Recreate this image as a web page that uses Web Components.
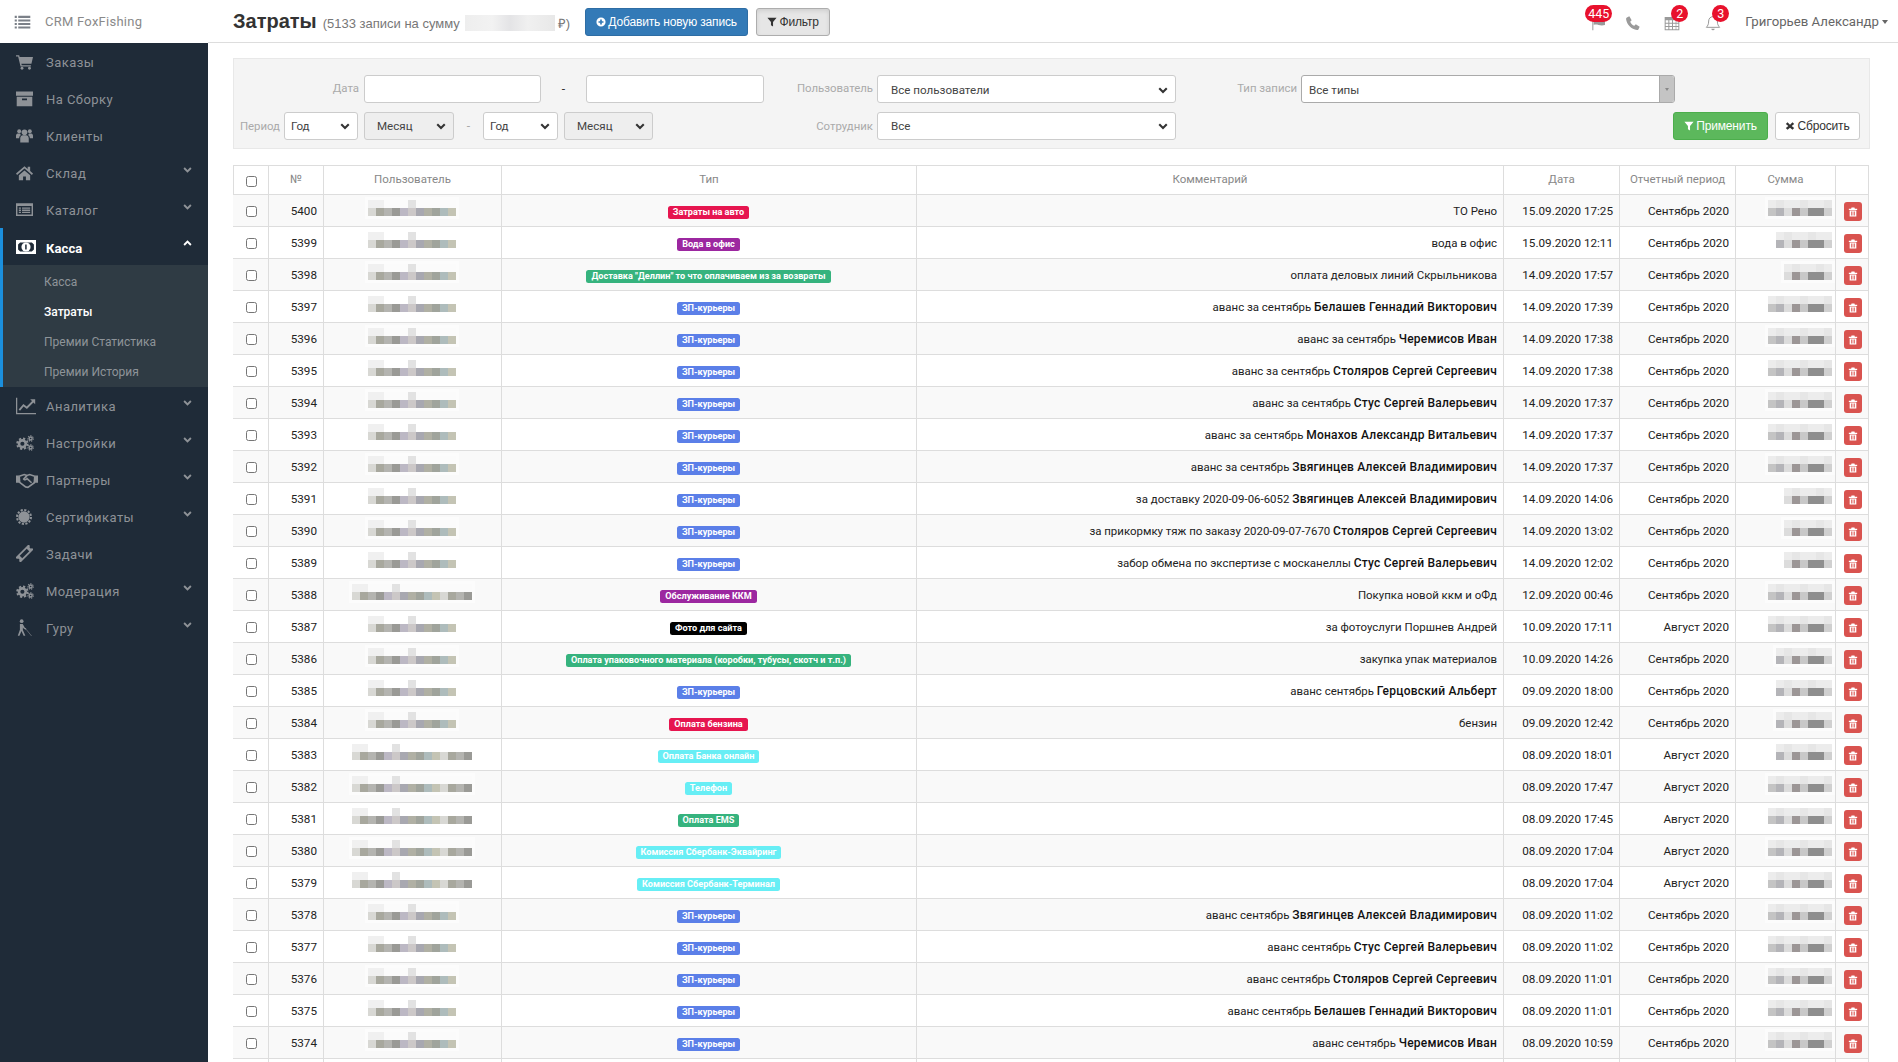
<!DOCTYPE html>
<html lang="ru">
<head>
<meta charset="utf-8">
<title>Затраты</title>
<style>
  html, body { margin: 0; height: 100%; overflow: hidden; background: #fff; }
  body { font-family: Roboto, "Liberation Sans", sans-serif; font-size: 12px; color: #222; }
</style>
</head>
<body>
<x-app></x-app>

<script>
// icons, all drawn on a 24x24 box
const ICONS = {
  menu: '<path d="M1 4h3v3H1zM6 4h17v3H6zM1 9h3v3H1zM6 9h17v3H6zM1 14h3v3H1zM6 14h17v3H6zM1 19h3v3H1zM6 19h17v3H6z"/>',
  cart: '<path d="M0 3h4.5l.6 2.5H24l-2.2 9.5H7.6l.5 2.2H21v2H6.4L3 5H0z"/><circle cx="8.5" cy="21.5" r="2"/><circle cx="19" cy="21.5" r="2"/>',
  archive: '<path fill-rule="evenodd" d="M0 2h24v6H0zM1 9.5h22V23H1zM8.5 12v2.5h7V12z"/>',
  users: '<circle cx="12" cy="7.5" r="4"/><circle cx="4.5" cy="6" r="2.8"/><circle cx="19.5" cy="6" r="2.8"/><path d="M6 22v-6c0-3 2-4.5 3.5-4.5h5c1.500 0 3.500 1.500 3.500 4.500v6zM0 16v-3.500c0-2 1-3.500 2.500-3.500h3.300c.2 1 .7 1.800 1.200 2.400C5 12.500 4.500 14 4.500 16zM24 16v-3.500c0-2-1-3.500-2.500-3.500h-3.300c-.2 1-.7 1.800-1.200 2.400 2 1.100 2.500 2.600 2.500 4.600z"/>',
  home: '<path d="M12 3 0 13.500 1.500 15.500 12 6.300l10.500 9.200 1.500-2-4-3.500V4h-3.500v3zM4 16v7h6v-5.500h4V23h6v-7l-8-7z"/>',
  list: '<path fill-rule="evenodd" d="M0 3h24v18H0zM2 7v12h20V7zM4 9h3v2H4zM8.500 9H20v2H8.500zM4 12h3v2H4zM8.500 12H20v2H8.500zM4 15h3v2H4zM8.500 15H20v2H8.500z"/>',
  money: '<path fill-rule="evenodd" d="M0 3.500h24v17H0zM5 6.500 2.500 9v6L5 17.500h14l2.500-2.500V9L19 6.500z"/><ellipse cx="12" cy="12" rx="5.500" ry="5.500"/><path d="M11 9h1.800v6H11z" fill="#1f2b38"/>',
  chart: '<path d="M0 2h1.500v18.500H24V22H0z"/><path d="M4 17l5-6 4 3 8-8" fill="none" stroke="currentColor" stroke-width="2.200"/><path d="M17 4h6v6z"/>',
  cogs: '<circle cx="8.500" cy="13" r="4.500" fill="none" stroke="currentColor" stroke-width="3.500"/><circle cx="8.500" cy="13" r="7" fill="none" stroke="currentColor" stroke-width="2.500" stroke-dasharray="3 2.500"/><circle cx="19.500" cy="6" r="2" fill="none" stroke="currentColor" stroke-width="1.800"/><circle cx="19.500" cy="6" r="3.600" fill="none" stroke="currentColor" stroke-width="1.400" stroke-dasharray="1.800 1.400"/><circle cx="19.500" cy="18" r="2" fill="none" stroke="currentColor" stroke-width="1.800"/><circle cx="19.500" cy="18" r="3.600" fill="none" stroke="currentColor" stroke-width="1.400" stroke-dasharray="1.800 1.400"/>',
  handshake: '<path d="M0 7h3l1 8H0zM24 7h-3l-1 8h4z"/><path d="M3.500 8 9 6l3 1 3-1 5.500 2 -.5 7-7 5-2.500-.5-6.500-5z" fill="none" stroke="currentColor" stroke-width="1.800"/><path d="M12 7 8.500 11c1 1 2.500 1 3.500-.5l5 4.500" fill="none" stroke="currentColor" stroke-width="1.800"/>',
  cert: '<circle cx="12" cy="12" r="8.500"/><circle cx="12" cy="12" r="10.500" fill="none" stroke="currentColor" stroke-width="3" stroke-dasharray="3.300 2.200"/>',
  ticket: '<g transform="rotate(-45 12 12)"><path fill-rule="evenodd" d="M-1 7h26v3a2 2 0 0 0 0 4v3H-1v-3a2 2 0 0 0 0-4zM5 9.500v5h14v-5z"/></g>',
  blind: '<circle cx="8" cy="3" r="2.600"/><path d="M5.500 7h4l3 5.500 2 1-.8 1.500-3-1.500-1-1.500v3.500l3.500 8h-2.500l-3-6.500-2.800 6.500H2.500L5.500 15z"/><path d="M13 13l9 11" stroke="currentColor" stroke-width=".8" fill="none"/>',
  phone: '<path d="M6.500 2 10 7.800 7.800 10c1 2.800 3.400 5.200 6.200 6.200l2.200-2.200L22 17.500l-1.700 3.700c-.5 1-1.400 1.300-2.300 1.200C9.500 21.500 2.500 14.500 1.600 6c-.1-.9.200-1.800 1.200-2.300z"/>',
  calendar: '<path fill-rule="evenodd" d="M1 3h22v20H1zM2.500 8v3.500h4V8zm5.500 0v3.500h4V8zm5.500 0v3.500h4V8zm5 0v3.500h3V8zM2.500 13v3.500h4V13zm5.500 0v3.500h4V13zm5.500 0v3.500h4V13zm5 0v3.500h3V13zM2.500 18v3.500h4V18zm5.500 0v3.500h4V18zm5.500 0v3.500h4V18zm5 0v3.500h3V18z"/>',
  bell: '<path d="M12 2.500c-4 0-6.500 3-6.500 6.500 0 5-1.500 7.500-3.500 9.500h20c-2-2-3.500-4.500-3.500-9.500 0-3.500-2.500-6.500-6.500-6.500z" fill="none" stroke="currentColor" stroke-width="1.500"/><path d="M9.500 20.500a2.500 2.500 0 0 0 5 0z"/>',
  flag: '<path d="M2 1h1.500v22H2z"/><path d="M4 3c5-2 8 2 17 0v12c-8 2-12-2-17 0z"/>',
  plus: '<path fill-rule="evenodd" d="M12 1a11 11 0 1 0 0 22 11 11 0 0 0 0-22zM10 6h4v4h4v4h-4v4h-4v-4H6v-4h4z"/>',
  filter: '<path d="M1 2h22l-8.500 10v11l-5-3.500V12z"/>',
  times: '<path d="M6 3l6 6 6-6 4 4-6 5 6 5-4 4-6-5-6 5-4-4 6-5-6-5z"/>',
  trash: '<path d="M8.500 1h7l1 3H22v3H2V4h5.500zM4 8.500h16V23H4zM7.500 11v9.500h1.800V11zM11.100 11v9.500h1.800V11zM14.700 11v9.500h1.800V11z" fill-rule="evenodd"/>',
  chevdown: '<path d="M3 8l9 9 9-9" fill="none" stroke="currentColor" stroke-width="5"/>',
  chevup: '<path d="M3 16l9-9 9 9" fill="none" stroke="currentColor" stroke-width="5"/>'
};

class XIcon extends HTMLElement {
  connectedCallback() {
    const size = this.getAttribute('size') || 16;
    this.attachShadow({ mode: 'open' }).innerHTML = `
      <style>:host { display: inline-flex; flex: none; } svg { display: block; fill: currentColor; }</style>
      <svg width="${size}" height="${size}" viewBox="0 0 24 24">${ICONS[this.getAttribute('name')] || ''}</svg>`;
  }
}

// the pixelated squares that hide names and sums in the screenshot
const SHADES = ['#d8d8d4', '#a8a89e', '#b4b4b0', '#9a9a96', '#bcb8c4', '#ccc8c8', '#a8a8b0', '#b0b0a4', '#a0a49c', '#aebcbc', '#c4c4b4'];
const SUM_SHADES = ['#c4c4c4', '#b4b4b8', '#dcdcdc', '#9c9696', '#c8c8c8', '#8e8e8e', '#8e8e8e', '#d0d0d0'];
class XMosaic extends HTMLElement {
  connectedCallback() {
    const n = Number(this.getAttribute('cells'));
    const sum = this.hasAttribute('sum');
    const shades = sum ? SUM_SHADES.slice(8 - n) : SHADES;
    let top = '';
    let bottom = '';
    for (let i = 0; i < n; i++) {
      const faint = sum ? (i % 3 == 1 ? '#e6e6e6' : '#ececec') : (i == 5 ? '#e2e2e2' : i < 2 ? '#f0f0f0' : 'transparent');
      top += `<i style="background:${faint}"></i>`;
      bottom += `<i style="background:${shades[i % shades.length]}"></i>`;
    }
    this.attachShadow({ mode: 'open' }).innerHTML = `
      <style>
        :host { display: inline-grid; grid-template-columns: repeat(${n}, 8px); grid-auto-rows: 8px; box-shadow: 0 0 0 3px rgba(255,255,255,.5); background: rgba(255,255,255,.4); }
      </style>${top}${bottom}`;
  }
}

class XNavItem extends HTMLElement {
  connectedCallback() {
    const arrow = this.getAttribute('arrow');
    this.attachShadow({ mode: 'open' }).innerHTML = `
      <style>
        :host { display: flex; align-items: center; height: 37px; padding-left: 16px; color: #8e9297; font-size: 13px; letter-spacing: .45px; position: relative; }
        :host([active]) { color: #fff; font-weight: 700; letter-spacing: .1px; }
        :host([active]) .text { padding-top: 4px; }
        .ic { width: 30px; display: flex; }
        .text { flex: 1; padding-top: 2px; }
        .arrow { margin-right: 16px; margin-top: -7px; display: flex; }
      </style>
      <span class="ic"><x-icon name="${this.getAttribute('icon')}" size="${this.getAttribute('size') || 17}"></x-icon></span>
      <span class="text"><slot></slot></span>
      ${arrow ? `<span class="arrow"><x-icon name="chev${arrow}" size="9"></x-icon></span>` : ''}`;
  }
}

class XSubItem extends HTMLElement {
  connectedCallback() {
    this.attachShadow({ mode: 'open' }).innerHTML = `
      <style>
        :host { display: flex; align-items: center; height: 30px; padding-left: 41px; color: #8e9499; font-size: 12px; }
        :host([active]) { color: #fff; font-weight: 500; }
      </style><slot></slot>`;
  }
}

class XSidebar extends HTMLElement {
  constructor() {
    super();
    this.attachShadow({ mode: 'open' }).innerHTML = `
      <style>
        :host { display: flex; flex-direction: column; width: 208px; flex: none; height: 100%; background: #1f2b38; }
        .logo { height: 43px; background: #fff; display: flex; align-items: center; padding-left: 14px; gap: 14px; color: #8a8a8a; font-size: 13px; letter-spacing: .25px; }
        .logo x-icon { color: #7b8088; }
        .open { border-left: 3px solid #1b8fdd; }
        .open x-nav-item { padding-left: 13px; }
        .sub { background: #2f3b44; padding-top: 2px; }
      </style>
      <div class="logo"><x-icon name="menu" size="17"></x-icon><span>CRM FoxFishing</span></div>
      <x-nav-item icon="cart">Заказы</x-nav-item>
      <x-nav-item icon="archive">На Сборку</x-nav-item>
      <x-nav-item icon="users">Клиенты</x-nav-item>
      <x-nav-item icon="home" arrow="down">Склад</x-nav-item>
      <x-nav-item icon="list" arrow="down">Каталог</x-nav-item>
      <div class="open">
        <x-nav-item icon="money" active arrow="up" size="20">Касса</x-nav-item>
        <div class="sub">
          <x-sub-item>Касса</x-sub-item>
          <x-sub-item active>Затраты</x-sub-item>
          <x-sub-item>Премии Статистика</x-sub-item>
          <x-sub-item>Премии История</x-sub-item>
        </div>
      </div>
      <x-nav-item icon="chart" arrow="down" size="20">Аналитика</x-nav-item>
      <x-nav-item icon="cogs" arrow="down" size="18">Настройки</x-nav-item>
      <x-nav-item icon="handshake" arrow="down" size="22">Партнеры</x-nav-item>
      <x-nav-item icon="cert" arrow="down" size="16">Сертификаты</x-nav-item>
      <x-nav-item icon="ticket" size="17">Задачи</x-nav-item>
      <x-nav-item icon="cogs" arrow="down" size="18">Модерация</x-nav-item>
      <x-nav-item icon="blind" arrow="down" size="17">Гуру</x-nav-item>`;
  }
}

class XButton extends HTMLElement {
  connectedCallback() {
    const icon = this.getAttribute('icon');
    this.attachShadow({ mode: 'open' }).innerHTML = `
      <style>
        :host { display: inline-flex; align-items: center; justify-content: center; gap: 2px; height: 28px; box-sizing: border-box; border: 1px solid #ccc; border-radius: 3px; background: #fff; color: #333; font-family: "Liberation Sans", sans-serif; font-size: 12px; letter-spacing: -.15px; flex: none; }
        :host([kind=primary]) { background: #337ab7; border-color: #2e6da4; color: #fff; }
        :host([kind=pressed]) { background: #e6e6e6; border-color: #adadad; box-shadow: inset 0 2px 4px rgba(0,0,0,.1); }
        :host([kind=success]) { background: #5cb85c; border-color: #4cae4c; color: #fff; }
      </style>
      <x-icon name="${icon}" size="10"></x-icon><slot></slot>`;
  }
}

class XBell extends HTMLElement {
  connectedCallback() {
    this.attachShadow({ mode: 'open' }).innerHTML = `
      <style>
        :host { display: block; position: relative; width: 16px; height: 16px; color: #9a9a9a; flex: none; }
        b { position: absolute; top: -10px; left: 50%; margin-left: -1px; min-width: 17px; height: 17px; padding: 0 1px; box-sizing: border-box; border-radius: 9px; background: #e8112d; color: #fff; font-size: 12.500px; font-weight: 400; line-height: 17px; text-align: center; }
        :host([wide]) b { left: -6px; margin-left: 0; width: 27px; }
      </style>
      <x-icon name="${this.getAttribute('icon')}" size="16"></x-icon>
      ${this.getAttribute('count') ? `<b>${this.getAttribute('count')}</b>` : ''}`;
  }
}

class XTopbar extends HTMLElement {
  constructor() {
    super();
    this.attachShadow({ mode: 'open' }).innerHTML = `
      <style>
        :host { display: flex; align-items: center; height: 43px; box-sizing: border-box; border-bottom: 1px solid #ddd; padding-left: 25px; flex: none; }
        h1 { margin: 0; font: 700 20px "Liberation Sans", sans-serif; color: #333; }
        .sub { margin-left: 6px; color: #777; font: 13px "Liberation Sans", sans-serif; display: flex; align-items: center; padding-top: 4px; white-space: pre; }
        .hidden { width: 90px; height: 16px; margin: 0 3px 0 5px; background: linear-gradient(90deg, #eee, #f2f2f2 30%, #e4e4e6 50%, #f0f0f0 70%, #e8e8e8); }
        x-button { margin: 2px 0 0 8px; }
        .first { margin-left: 15px; }
        .right { margin-left: auto; display: flex; align-items: center; padding-top: 4px; }
        .name { margin-left: 24px; margin-right: 3px; font-size: 13.200px; color: #666; white-space: nowrap; margin-top: -3px; }
        .caret { border-top: 4px solid #666; border-left: 3.500px solid transparent; border-right: 3.500px solid transparent; margin-right: 10px; margin-top: -3px; }
      </style>
      <h1>Затраты</h1>
      <span class="sub">(5133 записи на сумму<span class="hidden"></span>₽)</span>
      <x-button class="first" kind="primary" icon="plus" style="width:163px">Добавить новую запись</x-button>
      <x-button kind="pressed" icon="filter" style="width:74px">Фильтр</x-button>
      <div class="right">
        <x-bell icon="flag" count="445" wide></x-bell>
        <x-bell icon="phone" style="margin-left:18px"></x-bell>
        <x-bell icon="calendar" count="2" style="margin-left:23px"></x-bell>
        <x-bell icon="bell" count="3" style="margin-left:25px"></x-bell>
        <span class="name">Григорьев Александр</span>
        <span class="caret"></span>
      </div>`;
  }
}

class XSelect extends HTMLElement {
  connectedCallback() {
    this.attachShadow({ mode: 'open' }).innerHTML = `
      <style>
        :host { display: flex; align-items: center; height: 28px; box-sizing: border-box; border: 1px solid #ccc; border-radius: 3px; background: #fff; color: #444; font-size: 11.600px; padding: 0 7px 0 6px; flex: none; }
        :host([grey]) { background: #eee; padding-left: 12px; }
        :host([wide]) { padding-left: 13px; }
        span { flex: 1; }
        x-icon { color: #333; }
      </style>
      <span><slot></slot></span><x-icon name="chevdown" size="10"></x-icon>`;
  }
}

class XTypeSelect extends HTMLElement {
  constructor() {
    super();
    this.attachShadow({ mode: 'open' }).innerHTML = `
      <style>
        :host { display: flex; align-items: center; height: 28px; box-sizing: border-box; border: 1px solid #aaa; border-radius: 3px; background: #fff; color: #444; font-size: 11.600px; padding-left: 7px; flex: none; overflow: hidden; }
        span { flex: 1; padding-top: 2px; }
        .arrow { width: 14px; align-self: stretch; background: #c4c4c4; border-left: 1px solid #aaa; display: flex; align-items: center; justify-content: center; }
        .arrow::after { content: ""; border-top: 3.500px solid #888; border-left: 2.500px solid transparent; border-right: 2.500px solid transparent; }
      </style>
      <span><slot></slot></span><div class="arrow"></div>`;
  }
}

class XFilterPanel extends HTMLElement {
  constructor() {
    super();
    this.attachShadow({ mode: 'open' }).innerHTML = `
      <style>
        :host { display: grid; grid-template-columns: 550px 1fr; grid-template-rows: 28px 28px; row-gap: 9px; height: 91px; box-sizing: border-box; padding: 16px 9px 0 0; margin-top: 15px; width: 1637px; background: #f4f4f4; border: 1px solid #e8e8e8; flex: none; }
        .row { display: flex; align-items: center; }
        label { color: #aaa; font-size: 11.400px; text-align: right; flex: none; white-space: nowrap; }
        .up label { margin-top: -3px; }
        .up x-select { padding-top: 2px; }
        input { box-sizing: border-box; height: 28px; border: 1px solid #ccc; border-radius: 3px; background: #fff; flex: none; padding: 0; outline: none; }
        .dash { color: #333; text-align: center; flex: none; }
        .gap { flex: 1; }
      </style>
      <div class="row up">
        <label style="width:125px;margin-right:5px">Дата</label>
        <input style="width:177px">
        <span class="dash" style="width:45px">-</span>
        <input style="width:178px">
      </div>
      <div class="row up">
        <label style="width:89px;margin-right:4px">Пользователь</label>
        <x-select wide style="width:299px">Все пользователи</x-select>
        <label style="width:121px;margin-right:4px">Тип записи</label>
        <x-type-select style="width:374px">Все типы</x-type-select>
      </div>
      <div class="row">
        <label style="width:46px;margin-right:4px">Период</label>
        <x-select style="width:74px">Год</x-select>
        <x-select grey style="width:90px;margin-left:6px">Месяц</x-select>
        <span class="dash" style="width:29px;color:#aaa">-</span>
        <x-select style="width:75px">Год</x-select>
        <x-select grey style="width:89px;margin-left:6px">Месяц</x-select>
      </div>
      <div class="row">
        <label style="width:89px;margin-right:4px">Сотрудник</label>
        <x-select wide style="width:299px">Все</x-select>
        <span class="gap"></span>
        <x-button kind="success" icon="filter" style="width:95px">Применить</x-button>
        <x-button icon="times" style="width:85px;margin-left:7px">Сбросить</x-button>
      </div>`;
  }
}

class XBadge extends HTMLElement {
  connectedCallback() {
    this.attachShadow({ mode: 'open' }).innerHTML = `
      <style>
        :host { display: inline-block; height: 13px; line-height: 13px; padding: 0 5px; border-radius: 2.500px; color: #fff; font-size: 9.150px; font-weight: 700; white-space: nowrap; background: ${this.getAttribute('color')}; margin-top: 3px; }
      </style><slot></slot>`;
  }
}

const COLS = '36px 55px 178px 415px 587px 116px 116px 100px 33px';

class XCostRow extends HTMLElement {
  set data(r) {
    const name = r.bold ? ` <b>${r.bold}</b>` : '';
    // the row after the last one is only cut-off grid lines in the reference
    const cells = r.blank ? '<div></div>'.repeat(9) : `
      <div class="c first"><input type="checkbox"></div>
      <div class="r">${r.id}</div>
      <div class="c"><x-mosaic cells="${r.wide ? 15 : 11}"></x-mosaic></div>
      <div class="c"><x-badge color="${r.color}">${r.type}</x-badge></div>
      <div class="r note"><span>${r.text || ''}${name}</span></div>
      <div class="r">${r.date}</div>
      <div class="r">${r.period}</div>
      <div class="r sum"><x-mosaic sum cells="${r.cells || 8}"></x-mosaic></div>
      <div class="c"><span class="btn"><x-icon name="trash" size="10"></x-icon></span></div>`;
    this.attachShadow({ mode: 'open' }).innerHTML = `
      <style>
        :host { display: grid; grid-template-columns: ${COLS}; height: 32px; box-sizing: border-box; border-bottom: 1px solid #ddd; font-size: 11.700px; color: #222; }
        :host([striped]) { background: #f9f9f9; }
        div { display: flex; align-items: center; border-right: 1px solid #ddd; padding: 0 6px 0 5px; min-width: 0; white-space: nowrap; box-sizing: border-box; }
        div:first-child { border-left: 1px solid #ddd; }
        .first { padding: 0 4px 0 6px; }
        .c { justify-content: center; }
        .r { justify-content: flex-end; }
        .note { font-size: 11.450px; }
        b { font-size: 12px; font-weight: 500; letter-spacing: .22px; white-space: pre; color: #111; }
        input { width: 11px; height: 11px; margin: 2px 0 0 0; }
        x-mosaic { margin-bottom: 6px; }
        .sum { padding-right: 3px; }
        .btn { width: 18px; height: 19px; background: #d9534f; border-radius: 3px; color: #fff; display: flex; align-items: center; justify-content: center; margin: 2px 0 0 2px; }
      </style>${cells}`;
  }
}

const RED = '#e6154f', PURPLE = '#9c27a0', GREEN = '#36b37e', BLUE = '#5b7fe8', CYAN = '#67eef5', BLACK = '#000';
const SEP = 'Сентябрь 2020', AUG = 'Август 2020';
const ZP = { type: 'ЗП-курьеры', color: BLUE, period: SEP };
const ROWS = [
  { id: 5400, type: 'Затраты на авто', color: RED, text: 'ТО Рено', date: '15.09.2020 17:25', period: SEP },
  { id: 5399, type: 'Вода в офис', color: PURPLE, text: 'вода в офис', date: '15.09.2020 12:11', period: SEP, cells: 7 },
  { id: 5398, type: 'Доставка "Деллин" то что оплачиваем из за возвраты', color: GREEN, text: 'оплата деловых линий Скрыльникова', date: '14.09.2020 17:57', period: SEP, cells: 6 },
  { ...ZP, id: 5397, text: 'аванс за сентябрь', bold: 'Белашев Геннадий Викторович', date: '14.09.2020 17:39' },
  { ...ZP, id: 5396, text: 'аванс за сентябрь', bold: 'Черемисов Иван', date: '14.09.2020 17:38' },
  { ...ZP, id: 5395, text: 'аванс за сентябрь', bold: 'Столяров Сергей Сергеевич', date: '14.09.2020 17:38' },
  { ...ZP, id: 5394, text: 'аванс за сентябрь', bold: 'Стус Сергей Валерьевич', date: '14.09.2020 17:37' },
  { ...ZP, id: 5393, text: 'аванс за сентябрь', bold: 'Монахов Александр Витальевич', date: '14.09.2020 17:37' },
  { ...ZP, id: 5392, text: 'аванс за сентябрь', bold: 'Звягинцев Алексей Владимирович', date: '14.09.2020 17:37' },
  { ...ZP, id: 5391, text: 'за доставку 2020-09-06-6052', bold: 'Звягинцев Алексей Владимирович', date: '14.09.2020 14:06', cells: 6 },
  { ...ZP, id: 5390, text: 'за прикормку тяж по заказу 2020-09-07-7670', bold: 'Столяров Сергей Сергеевич', date: '14.09.2020 13:02', cells: 6 },
  { ...ZP, id: 5389, text: 'забор обмена по экспертизе с москанеллы', bold: 'Стус Сергей Валерьевич', date: '14.09.2020 12:02', cells: 6 },
  { id: 5388, wide: true, type: 'Обслуживание ККМ', color: PURPLE, text: 'Покупка новой ккм и оФд', date: '12.09.2020 00:46', period: SEP },
  { id: 5387, type: 'Фото для сайта', color: BLACK, text: 'за фотоуслуги Поршнев Андрей', date: '10.09.2020 17:11', period: AUG },
  { id: 5386, type: 'Оплата упаковочного материала (коробки, тубусы, скотч и т.п.)', color: GREEN, text: 'закупка упак материалов', date: '10.09.2020 14:26', period: SEP, cells: 7 },
  { ...ZP, id: 5385, text: 'аванс сентябрь', bold: 'Герцовский Альберт', date: '09.09.2020 18:00', cells: 7 },
  { id: 5384, type: 'Оплата бензина', color: RED, text: 'бензин', date: '09.09.2020 12:42', period: SEP, cells: 7 },
  { id: 5383, wide: true, type: 'Оплата Банка онлайн', color: CYAN, date: '08.09.2020 18:01', period: AUG, cells: 7 },
  { id: 5382, wide: true, type: 'Телефон', color: CYAN, date: '08.09.2020 17:47', period: AUG },
  { id: 5381, wide: true, type: 'Оплата EMS', color: GREEN, date: '08.09.2020 17:45', period: AUG },
  { id: 5380, wide: true, type: 'Комиссия Сбербанк-Эквайринг', color: CYAN, date: '08.09.2020 17:04', period: AUG },
  { id: 5379, wide: true, type: 'Комиссия Сбербанк-Терминал', color: CYAN, date: '08.09.2020 17:04', period: AUG },
  { ...ZP, id: 5378, text: 'аванс сентябрь', bold: 'Звягинцев Алексей Владимирович', date: '08.09.2020 11:02' },
  { ...ZP, id: 5377, text: 'аванс сентябрь', bold: 'Стус Сергей Валерьевич', date: '08.09.2020 11:02' },
  { ...ZP, id: 5376, text: 'аванс сентябрь', bold: 'Столяров Сергей Сергеевич', date: '08.09.2020 11:01' },
  { ...ZP, id: 5375, text: 'аванс сентябрь', bold: 'Белашев Геннадий Викторович', date: '08.09.2020 11:01' },
  { ...ZP, id: 5374, text: 'аванс сентябрь', bold: 'Черемисов Иван', date: '08.09.2020 10:59' },
  { blank: true }
];

class XCostTable extends HTMLElement {
  constructor() {
    super();
    this.attachShadow({ mode: 'open' }).innerHTML = `
      <style>
        :host { display: block; margin-top: 16px; width: 1636px; flex: none; }
        .head { display: grid; grid-template-columns: ${COLS}; height: 30px; box-sizing: border-box; border-top: 1px solid #ddd; border-bottom: 1px solid #ddd; color: #888; font-size: 11.500px; }
        .head div { display: flex; align-items: center; justify-content: center; border-right: 1px solid #ddd; padding-bottom: 2px; box-sizing: border-box; }
        .head div:first-child { border-left: 1px solid #ddd; padding: 2px 0 0; }
        input { width: 11px; height: 11px; margin: 0; }
      </style>
      <div class="head">
        <div><input type="checkbox"></div><div>№</div><div>Пользователь</div><div>Тип</div><div>Комментарий</div><div>Дата</div><div>Отчетный период</div><div>Сумма</div><div></div>
      </div>
      <div id="rows"></div>`;
  }
  connectedCallback() {
    const box = this.shadowRoot.getElementById('rows');
    ROWS.forEach((r, i) => {
      const row = document.createElement('x-cost-row');
      if (i % 2 == 0) row.setAttribute('striped', '');
      box.appendChild(row);
      row.data = r;
    });
  }
}

class XApp extends HTMLElement {
  constructor() {
    super();
    this.attachShadow({ mode: 'open' }).innerHTML = `
      <style>
        :host { display: flex; height: 100%; }
        main { flex: 1; display: flex; flex-direction: column; min-width: 0; }
        .page { padding-left: 25px; }
      </style>
      <x-sidebar></x-sidebar>
      <main>
        <x-topbar></x-topbar>
        <div class="page">
          <x-filter-panel></x-filter-panel>
          <x-cost-table></x-cost-table>
        </div>
      </main>`;
  }
}

customElements.define('x-icon', XIcon);
customElements.define('x-mosaic', XMosaic);
customElements.define('x-nav-item', XNavItem);
customElements.define('x-sub-item', XSubItem);
customElements.define('x-sidebar', XSidebar);
customElements.define('x-button', XButton);
customElements.define('x-bell', XBell);
customElements.define('x-topbar', XTopbar);
customElements.define('x-select', XSelect);
customElements.define('x-type-select', XTypeSelect);
customElements.define('x-filter-panel', XFilterPanel);
customElements.define('x-badge', XBadge);
customElements.define('x-cost-row', XCostRow);
customElements.define('x-cost-table', XCostTable);
customElements.define('x-app', XApp);
</script>
</body>
</html>
